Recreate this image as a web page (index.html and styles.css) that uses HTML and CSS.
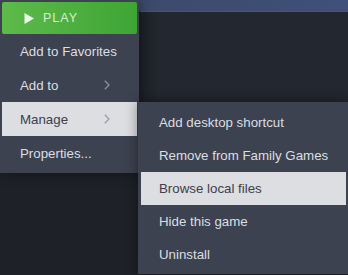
FILE: index.html
```html
<!DOCTYPE html>
<html lang="en">
  <head>
    <meta charset="UTF-8">
    <meta name="viewport" content="width=device-width, initial-scale=1">
    <title>Library context menu</title>
    <link rel="stylesheet" href="styles.css">
  </head>
  <body>
    <div class="scene">
      <div class="topbar"></div>
      <div class="content">
        <div class="sidebar"></div>
        <div class="panel"></div>
      </div>

      <div class="menu main-menu">
        <button class="play-button">
          <svg class="play-icon" width="10" height="11" viewBox="0 0 10 11"><path d="M0.5 0 L10 5.5 L0.5 11 Z" fill="#eef7ea"/></svg>
          <span>PLAY</span>
        </button>
        <div class="menu-item">Add to Favorites</div>
        <div class="menu-item has-sub">Add to
          <svg class="chevron" width="6" height="10" viewBox="0 0 6 10"><path d="M0.8 0.8 L5 5 L0.8 9.2" fill="none" stroke="currentColor" stroke-width="1.3"/></svg>
        </div>
        <div class="menu-item has-sub active">Manage
          <svg class="chevron" width="6" height="10" viewBox="0 0 6 10"><path d="M0.8 0.8 L5 5 L0.8 9.2" fill="none" stroke="currentColor" stroke-width="1.3"/></svg>
        </div>
        <div class="menu-item">Properties...</div>
      </div>

      <div class="menu sub-menu">
        <div class="menu-item">Add desktop shortcut</div>
        <div class="menu-item">Remove from Family Games</div>
        <div class="menu-item active">Browse local files</div>
        <div class="menu-item">Hide this game</div>
        <div class="menu-item">Uninstall</div>
      </div>
    </div>
  </body>
</html>
```

FILE: styles.css
```css
html, body {
  margin: 0;
  width: 100%;
  height: 100%;
  background-color: #23262e;
  overflow: hidden;
}

.scene {
  position: relative;
  width: 348px;
  height: 275px;
  font-family: "Liberation Sans", Arial, sans-serif;
  font-size: 13.3px;
}

.topbar {
  height: 11px;
  background: linear-gradient(to right, #3a4560, #40507a);
}

.content {
  display: flex;
  height: 264px;
}

.sidebar {
  width: 140px;
  background-color: #1e2127;
}

.panel {
  flex: 1;
  background: linear-gradient(to right, #1d2027, #23272f 20px);
  border-top: 1px solid #4a5572;
}

.menu {
  position: absolute;
  box-sizing: border-box;
  background-color: #3d4250;
  box-shadow: 0 0 12px rgba(0, 0, 0, 0.45);
}

.main-menu {
  left: 0;
  top: 0;
  width: 139px;
  padding: 2px 2px 3px 2px;
}

.sub-menu {
  left: 138px;
  top: 102px;
  width: 211px;
  padding: 4px 3px 3px 3px;
  background-color: #3c4250;
}

.sub-menu .menu-item {
  height: 33px;
}

.play-button {
  display: flex;
  align-items: center;
  width: 100%;
  height: 32px;
  padding: 0 0 0 22px;
  border: none;
  border-radius: 2px;
  background: linear-gradient(to right, #5dba4b, #3ea535);
  color: #d6efce;
  font-family: inherit;
  font-size: 12.5px;
  letter-spacing: 1px;
  cursor: pointer;
}

.play-icon {
  margin-right: 9px;
}

.menu-item {
  display: flex;
  align-items: center;
  height: 34px;
  padding-left: 18px;
  color: #dcdee2;
  white-space: nowrap;
}

.menu-item.active {
  background-color: #dcdee2;
  color: #3b404c;
}

.has-sub {
  position: relative;
}

.chevron {
  position: absolute;
  left: 102px;
  top: 12px;
  color: #8b909b;
}

.active .chevron {
  color: #9a9da6;
}
```
